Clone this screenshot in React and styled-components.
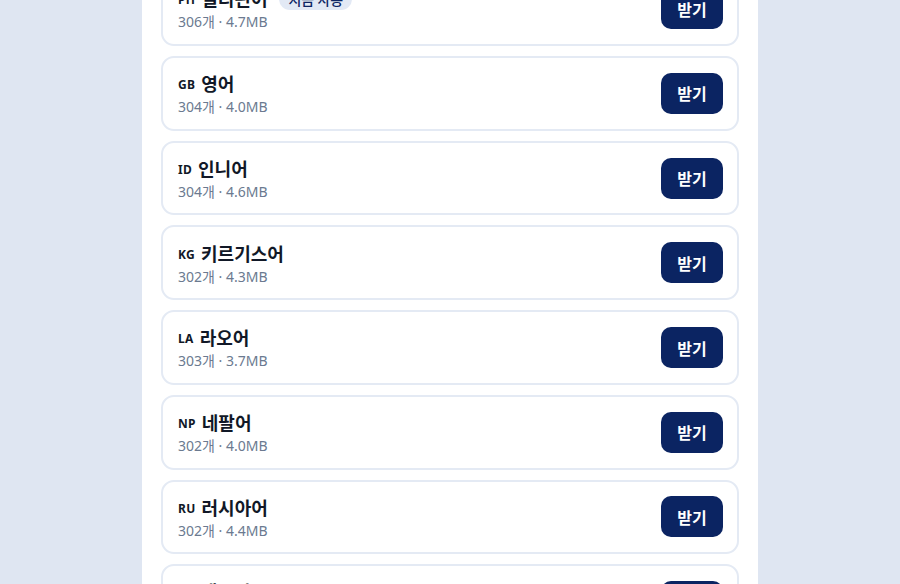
import styled, { createGlobalStyle } from 'styled-components';

const PACKS = [
    { code: 'PH', name: '필리핀어', count: 306, size: '4.7MB', current: true },
    { code: 'GB', name: '영어', count: 304, size: '4.0MB' },
    { code: 'ID', name: '인니어', count: 304, size: '4.6MB' },
    { code: 'KG', name: '키르기스어', count: 302, size: '4.3MB' },
    { code: 'LA', name: '라오어', count: 303, size: '3.7MB' },
    { code: 'NP', name: '네팔어', count: 302, size: '4.0MB' },
    { code: 'RU', name: '러시아어', count: 302, size: '4.4MB' },
    { code: 'TH', name: '태국어', count: 301, size: '4.1MB' },
];

function App() {
    return (
        <>
            <GlobalStyle />
            <Panel>
                <List>
                    {PACKS.map((pack) => (
                        <Card key={pack.code}>
                            <Info>
                                <TitleRow>
                                    <Code>{pack.code}</Code>
                                    <Name>{pack.name}</Name>
                                    {pack.current && <Badge>지금 사용</Badge>}
                                </TitleRow>
                                <Meta>
                                    {pack.count}개 · {pack.size}
                                </Meta>
                            </Info>
                            <GetButton>받기</GetButton>
                        </Card>
                    ))}
                </List>
            </Panel>
        </>
    );
}

export default App;

const GlobalStyle = createGlobalStyle`
    html, body {
        margin: 0;
        height: 100%;
        background-color: #dfe6f2;
        overflow: hidden;
    }

    body {
        font-family: "Noto Sans", "Noto Sans CJK KR", sans-serif;
    }
`;

const Panel = styled.main`
    box-sizing: border-box;
    width: 616px;
    min-height: 584px;
    margin: 0 auto;
    padding: 0 19px;
    background-color: #ffffff;
    overflow: hidden;
`;

// the list is scrolled a little: the first card starts above the frame
const List = styled.div`
    display: flex;
    flex-direction: column;
    gap: 10px;
    margin-top: -28.6px;
`;

const Card = styled.div`
    display: flex;
    align-items: center;
    justify-content: space-between;
    height: 74.7px;
    box-sizing: border-box;
    padding: 0 14px 0 15px;
    border: 2px solid #e4eaf4;
    border-radius: 13px;
    background-color: #ffffff;
`;

const Info = styled.div`
    display: flex;
    flex-direction: column;
`;

const TitleRow = styled.div`
    display: flex;
    align-items: center;
    gap: 6px;
    height: 27px;
`;

const Code = styled.span`
    font-size: 12px;
    font-weight: 700;
    color: #111827;
    letter-spacing: 0.3px;
    padding-top: 2px;
`;

const Name = styled.span`
    font-family: "Noto Sans CJK KR", sans-serif;
    font-size: 18px;
    font-weight: 700;
    line-height: 27px;
    color: #111827;
`;

const Badge = styled.span`
    margin-left: 6px;
    padding: 1px 9px;
    border-radius: 999px;
    background-color: #e2e9f5;
    color: #0d2563;
    font-family: "Noto Sans CJK KR", sans-serif;
    font-size: 14px;
    font-weight: 500;
    line-height: 20px;
`;

const Meta = styled.div`
    font-family: "Noto Sans", "Noto Sans CJK KR", sans-serif;
    font-size: 14px;
    line-height: 19.6px;
    color: #6b7a90;
`;

const GetButton = styled.button`
    width: 62px;
    height: 41px;
    border: none;
    border-radius: 10px;
    background-color: #0b2462;
    color: #ffffff;
    font-family: "Noto Sans CJK KR", sans-serif;
    font-size: 16px;
    font-weight: 700;
    cursor: pointer;
`;
